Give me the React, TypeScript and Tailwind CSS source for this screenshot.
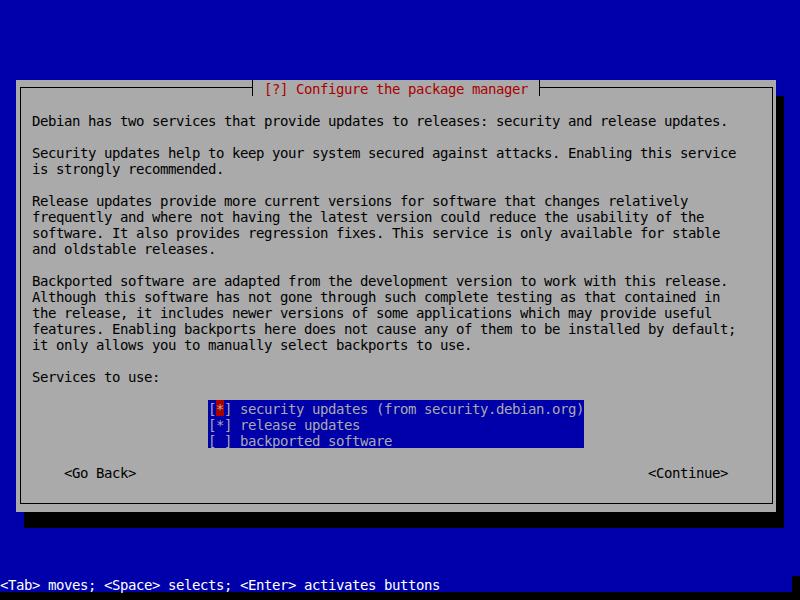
const paragraphs: string[] = [
  "Debian has two services that provide updates to releases: security and release updates.",
  "",
  "Security updates help to keep your system secured against attacks. Enabling this service",
  "is strongly recommended.",
  "",
  "Release updates provide more current versions for software that changes relatively",
  "frequently and where not having the latest version could reduce the usability of the",
  "software. It also provides regression fixes. This service is only available for stable",
  "and oldstable releases.",
  "",
  "Backported software are adapted from the development version to work with this release.",
  "Although this software has not gone through such complete testing as that contained in",
  "the release, it includes newer versions of some applications which may provide useful",
  "features. Enabling backports here does not cause any of them to be installed by default;",
  "it only allows you to manually select backports to use.",
  "",
  "Services to use:",
  "",
];

const services = [
  { label: "security updates (from security.debian.org)", checked: true },
  { label: "release updates", checked: true },
  { label: "backported software", checked: false },
];

function Line({ text }: { text: string }) {
  return <div className="h-[16px] pt-[1px]">{text}</div>;
}

export default function App() {
  return (
    <div className="w-[800px] h-[600px] bg-black flex flex-col font-['DejaVu_Sans_Mono',monospace] text-[14px] tracking-[-0.43px] leading-[16px] overflow-hidden">
      <div className="h-[576px] bg-[#0000aa] pt-[80px] pl-[16px]">
        <div className="w-[760px] h-[432px] bg-[#aaaaaa] shadow-[8px_16px_0_0_#000] pt-[7px] pl-[4px] pr-[3px] pb-[8px]">
          <div className="relative h-full border border-black pt-[24px] pl-[11px] text-black whitespace-pre">
            {/* title sits over the top border */}
            <div className="absolute -top-[8px] left-[231px] h-[16px] pt-[1px] bg-[#aaaaaa] border-x border-black pl-[11px] pr-[11px] text-[#aa0000]">
              [?] Configure the package manager
            </div>

            {paragraphs.map((p, i) => (
              <Line key={i} text={p} />
            ))}

            <div className="ml-[176px] w-[376px] bg-[#0000aa] text-[#aaaaaa]">
              {services.map((s, i) => (
                <div key={s.label} className="h-[16px] flex">
                  <span className="pt-[1px]">[</span>
                  <span className={i === 0 ? "pt-[1px] bg-[#aa0000]" : "pt-[1px]"}>
                    {s.checked ? "*" : " "}
                  </span>
                  <span className="pt-[1px]">] {s.label}</span>
                </div>
              ))}
            </div>

            <Line text="" />

            <div className="h-[16px] pt-[1px] flex">
              <span className="ml-[32px]">&lt;Go Back&gt;</span>
              <span className="ml-[512px]">&lt;Continue&gt;</span>
            </div>
          </div>
        </div>
      </div>

      <div className="h-[16px] flex bg-[#0000aa]">
        <span className="flex-1 pt-[1px] text-white whitespace-pre">
          &lt;Tab&gt; moves; &lt;Space&gt; selects; &lt;Enter&gt; activates buttons
        </span>
        <span className="w-[8px] bg-black" />
      </div>
    </div>
  );
}
